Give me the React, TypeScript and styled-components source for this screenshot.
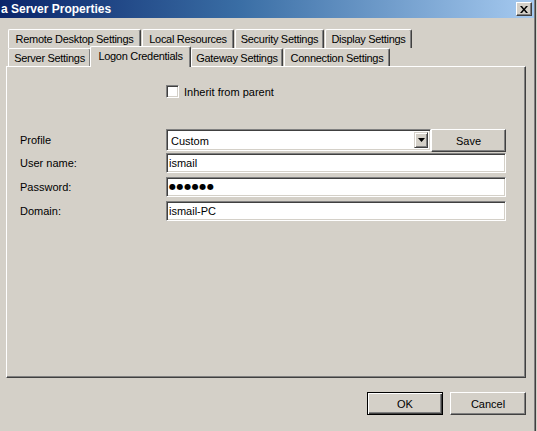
import React from 'react';
import styled, { createGlobalStyle, css } from 'styled-components';

const GlobalStyle = createGlobalStyle`
  html, body {
    margin: 0;
    padding: 0;
    background: #d4d0c8;
  }
  body {
    font-family: 'Liberation Sans', Arial, sans-serif;
    font-size: 11px;
    color: #000;
  }
`;

const topTabs = [
  { label: 'Remote Desktop Settings', width: 133 },
  { label: 'Local Resources', width: 92 },
  { label: 'Security Settings', width: 89 },
  { label: 'Display Settings', width: 87 },
];

const frontTabs = [
  { label: 'Server Settings', width: 83 },
  { label: 'Logon Credentials', width: 101, selected: true },
  { label: 'Gateway Settings', width: 92 },
  { label: 'Connection Settings', width: 106 },
];

const App = () => {
  return (
    <>
      <GlobalStyle />
      <Window>
        <TitleBar>
          <TitleText>a Server Properties</TitleText>
          <CloseButton>
            <svg width="8" height="7" viewBox="0 0 8 7">
              <path d="M0 0h2l2 2.5L6 0h2L5 3.5 8 7H6L4 4.5 2 7H0l3-3.5z" fill="#000" />
            </svg>
          </CloseButton>
        </TitleBar>

        <Body>
          <TabStrip>
            <TabRow $height={19}>
              {topTabs.map(tab => (
                <Tab key={tab.label} $width={tab.width}>{tab.label}</Tab>
              ))}
            </TabRow>
            <TabRow $height={18}>
              {frontTabs.map(tab => (
                <Tab key={tab.label} $width={tab.width} $selected={tab.selected}>
                  {tab.label}
                </Tab>
              ))}
            </TabRow>
          </TabStrip>

          <Panel>
            <Form>
              <CheckRow>
                <CheckBox />
                <span>Inherit from parent</span>
              </CheckRow>

              <Label $tall>Profile</Label>
              <Combo>
                <ComboText>Custom</ComboText>
                <ComboArrow>
                  <svg width="7" height="4" viewBox="0 0 7 4">
                    <path d="M0 0h7L3.5 4z" fill="#000" />
                  </svg>
                </ComboArrow>
              </Combo>
              <SaveButton>Save</SaveButton>

              <Label>User name:</Label>
              <TextField>ismail</TextField>

              <Label>Password:</Label>
              <TextField $secret>●●●●●●</TextField>

              <Label>Domain:</Label>
              <TextField>ismail-PC</TextField>
            </Form>
          </Panel>

          <Footer>
            <DialogButton $default>OK</DialogButton>
            <DialogButton>Cancel</DialogButton>
          </Footer>
        </Body>
      </Window>
    </>
  );
};

const raised = css`
  background: #d4d0c8;
  border: 1px solid;
  border-color: #fff #404040 #404040 #fff;
  box-shadow: inset -1px -1px #808080;
`;

const sunken = css`
  background: #fff;
  border: 1px solid;
  border-color: #808080 #fff #fff #808080;
  box-shadow: inset 1px 1px #404040, inset -1px -1px #d4d0c8;
`;

const Window = styled.div`
  box-sizing: border-box;
  width: 536px;
  height: 431px;
  background: #d4d0c8;
  border-right: 1px solid #404040;
  box-shadow: inset -1px 0 #808080;
  display: flex;
  flex-direction: column;
`;

const TitleBar = styled.div`
  height: 18px;
  margin-right: 1px;
  padding-right: 2px;
  display: flex;
  align-items: center;
  justify-content: space-between;
  background: linear-gradient(90deg, #0a246a 0%, #3a6ea5 45%, #a6caf0 100%);
`;

const TitleText = styled.span`
  color: #fff;
  font-weight: bold;
  font-size: 12px;
  line-height: 18px;
  padding-left: 1px;
`;

const CloseButton = styled.div`
  ${raised};
  box-sizing: border-box;
  width: 16px;
  height: 14px;
  display: flex;
  align-items: center;
  justify-content: center;
`;

const Body = styled.div`
  padding: 11px 0 0 6px;
  display: flex;
  flex-direction: column;
`;

const TabStrip = styled.div`
  padding-left: 2px;
  display: flex;
  flex-direction: column;
`;

const TabRow = styled.div<{ $height: number }>`
  display: flex;
  gap: 1px;
  height: ${p => p.$height}px;
`;

const Tab = styled.div<{ $width: number; $selected?: boolean }>`
  box-sizing: border-box;
  width: ${p => p.$width}px;
  height: 100%;
  background: #d4d0c8;
  border-top: 1px solid #fff;
  border-left: 1px solid #fff;
  border-right: 1px solid #404040;
  box-shadow: inset -1px 0 #808080;
  border-radius: 2px 2px 0 0;
  display: flex;
  align-items: center;
  justify-content: center;
  white-space: nowrap;
  letter-spacing: -0.3px;

  ${p => p.$selected && css`
    position: relative;
    z-index: 1;
    height: calc(100% + 3px);
    margin: -2px -1px 0 -2px;
    padding-bottom: 3px;
  `}
`;

const Panel = styled.div`
  box-sizing: border-box;
  width: 520px;
  height: 312px;
  padding: 18px 0 0 13px;
  border: 1px solid;
  border-color: #fff #404040 #404040 #fff;
  box-shadow: inset -1px -1px #808080;
`;

const Form = styled.div`
  display: grid;
  grid-template-columns: 146px 265px 75px;
  grid-template-rows: 44px 24px 24px 24px 20px;
  align-items: start;
`;

const CheckRow = styled.label`
  grid-column: 2 / 4;
  display: flex;
  align-items: center;
  gap: 5px;
  height: 13px;
`;

const CheckBox = styled.span`
  ${sunken};
  box-sizing: border-box;
  width: 13px;
  height: 13px;
`;

const Label = styled.div<{ $tall?: boolean }>`
  grid-column: 1;
  line-height: ${p => (p.$tall ? 22 : 20)}px;
`;

const Combo = styled.div`
  ${sunken};
  box-sizing: border-box;
  height: 22px;
  display: flex;
  align-items: stretch;
  padding: 2px;
`;

const ComboText = styled.div`
  flex: 1;
  padding-left: 2px;
  line-height: 18px;
`;

const ComboArrow = styled.div`
  box-sizing: border-box;
  width: 14px;
  background: #d4d0c8;
  border: 1px solid;
  border-color: #d4d0c8 #404040 #404040 #d4d0c8;
  box-shadow: inset 1px 1px #fff, inset -1px -1px #808080;
  display: flex;
  align-items: center;
  justify-content: center;
`;

const SaveButton = styled.div`
  ${raised};
  box-sizing: border-box;
  height: 23px;
  display: flex;
  align-items: center;
  justify-content: center;
`;

const TextField = styled.div<{ $secret?: boolean }>`
  ${sunken};
  grid-column: 2 / 4;
  box-sizing: border-box;
  height: 20px;
  padding-left: 2px;
  line-height: 18px;

  ${p => p.$secret && css`
    font-family: 'DejaVu Sans', sans-serif;
    font-size: 8px;
    letter-spacing: 0.6px;
  `}
`;

const Footer = styled.div`
  width: 520px;
  margin-top: 14px;
  display: flex;
  justify-content: flex-end;
  gap: 7px;
`;

const DialogButton = styled.div<{ $default?: boolean }>`
  ${raised};
  box-sizing: border-box;
  width: 76px;
  height: 23px;
  display: flex;
  align-items: center;
  justify-content: center;

  ${p => p.$default && css`
    border-color: #000;
    box-shadow: inset 1px 1px #fff, inset -1px -1px #404040, inset -2px -2px #808080;
  `}
`;

export default App;
